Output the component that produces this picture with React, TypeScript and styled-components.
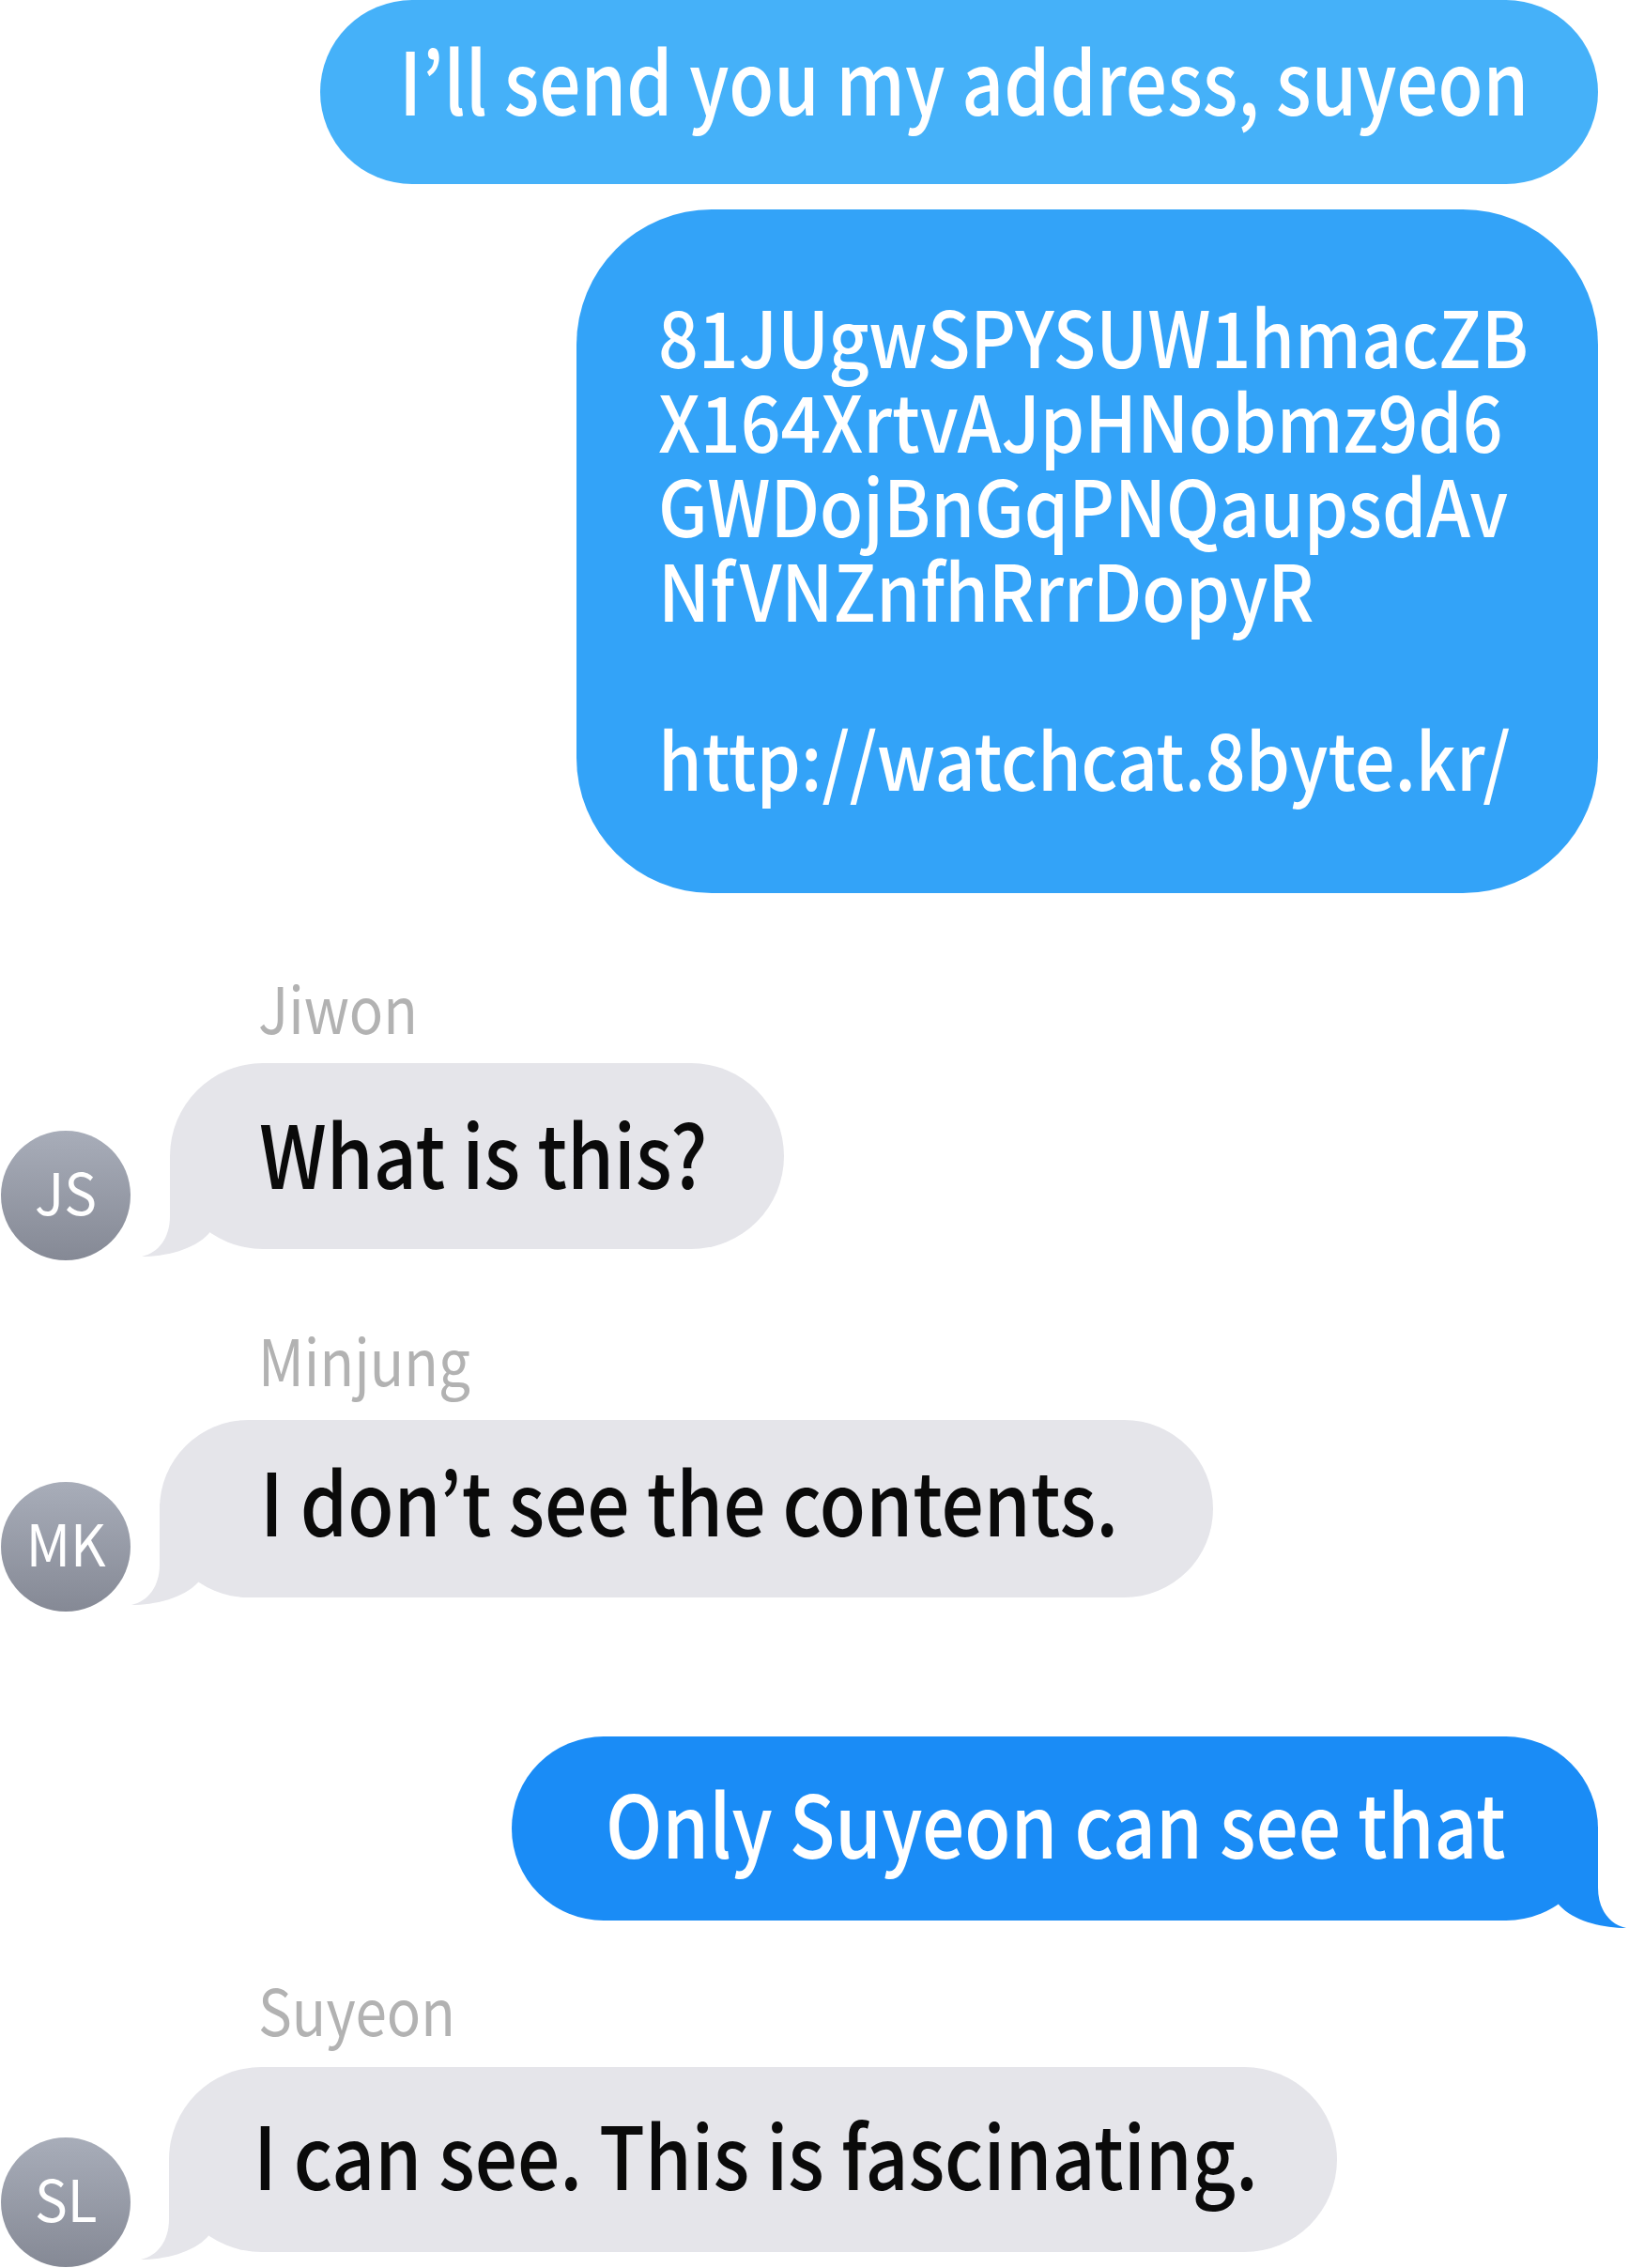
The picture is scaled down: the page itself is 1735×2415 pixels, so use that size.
import React from "react";
import styled, { createGlobalStyle } from "styled-components";

const FONT = `"Noto Sans CJK KR", "Noto Sans", sans-serif`;

const Global = createGlobalStyle`
  html, body { margin: 0; padding: 0; background: #ffffff; }
  #root { width: 1735px; }
`;

const Page = styled.div`
  width: 1735px;
  height: 2415px;
  overflow: hidden;
  background: #ffffff;
  display: flex;
  flex-direction: column;
  font-family: ${FONT};
`;

const SentRow = styled.div<{ $mt: number }>`
  display: flex;
  justify-content: flex-end;
  padding-right: 33px;
  margin-top: ${(p) => p.$mt}px;
`;

const Bubble = styled.div<{
  $bg: string;
  $fg: string;
  $w: number;
  $h: number;
  $r: number;
  $pt: number;
  $pl: number;
  $fs?: number;
  $lh?: number;
  $ml?: number;
}>`
  position: relative;
  box-sizing: border-box;
  flex-shrink: 0;
  width: ${(p) => p.$w}px;
  height: ${(p) => p.$h}px;
  margin-left: ${(p) => p.$ml ?? 0}px;
  border-radius: ${(p) => p.$r}px;
  background: ${(p) => p.$bg};
  color: ${(p) => p.$fg};
  padding-top: ${(p) => p.$pt}px;
  padding-left: ${(p) => p.$pl}px;
  font-size: ${(p) => p.$fs ?? 92}px;
  font-weight: 500;
  line-height: ${(p) => p.$lh ?? p.$fs ?? 92}px;
  white-space: nowrap;
`;

/* The reference face is a narrow cut of Source Sans; condense the glyphs horizontally. */
const Line = styled.span<{ $sx?: number; $h?: number }>`
  display: block;
  height: ${(p) => (p.$h ? `${p.$h}px` : "auto")};
  transform: scaleX(${(p) => p.$sx ?? 0.871});
  transform-origin: 0 50%;
`;

const Tail = styled.svg<{ $side: "left" | "right" }>`
  position: absolute;
  bottom: -12px;
  width: 140px;
  height: 120px;
  overflow: visible;
  ${(p) => (p.$side === "left" ? "left: -35px;" : "right: -35px; transform: scaleX(-1);")}
`;

const Group = styled.div<{ $mt: number }>`
  display: flex;
  flex-direction: column;
  margin-top: ${(p) => p.$mt}px;
`;

const SenderName = styled.div<{ $gap: number }>`
  font-size: 68px;
  line-height: 68px;
  color: #b2b2b2;
  padding-left: 275px;
  margin-bottom: ${(p) => p.$gap}px;
  white-space: nowrap;
  transform: scaleX(0.885);
  transform-origin: 275px 50%;
`;

const ReceivedRow = styled.div`
  display: flex;
  align-items: flex-end;
`;

const Avatar = styled.div<{ $drop: number }>`
  box-sizing: border-box;
  flex-shrink: 0;
  width: 138px;
  height: 138px;
  margin-left: 1px;
  margin-bottom: -${(p) => p.$drop}px;
  border-radius: 50%;
  background: linear-gradient(180deg, #a8adb9 0%, #858995 100%);
  color: #ffffff;
  font-size: 62px;
  display: flex;
  align-items: center;
  justify-content: center;
  padding-bottom: 13px;
`;

const Initials = styled.span`
  display: inline-block;
  transform: scaleX(0.94);
`;

const TAIL_PATH =
  "M35 8 L35 73 C35 96 23 112 5 116 C30 116 60 109 76 92 L100 60 L100 8 Z";

function BubbleTail({ side, color }: { side: "left" | "right"; color: string }) {
  return (
    <Tail $side={side} viewBox="0 0 140 120" aria-hidden>
      <path d={TAIL_PATH} fill={color} />
    </Tail>
  );
}

const GRAY = "#e5e5ea";
const INK = "#0a0a0a";

type Received = {
  name: string;
  initials: string;
  text: string;
  mt: number;
  gap: number;
  drop: number;
  ml: number;
  w: number;
  h: number;
  pt: number;
  pl: number;
  sx: number;
};

const received: Received[] = [
  { name: "Jiwon", initials: "JS", text: "What is this?", mt: 87, gap: 26, drop: 12, ml: 42, w: 654, h: 198, pt: 48, pl: 95, sx: 0.873 },
  { name: "Minjung", initials: "MK", text: "I don’t see the contents.", mt: 83, gap: 31, drop: 15, ml: 31, w: 1122, h: 189, pt: 38, pl: 107, sx: 0.871 },
];

const last: Received = {
  name: "Suyeon", initials: "SL", text: "I can see. This is fascinating.", mt: 60, gap: 28, drop: 16, ml: 41, w: 1244, h: 197, pt: 45, pl: 90, sx: 0.87,
};

function ReceivedMessage({ m }: { m: Received }) {
  return (
    <Group $mt={m.mt}>
      <SenderName $gap={m.gap}>{m.name}</SenderName>
      <ReceivedRow>
        <Avatar $drop={m.drop}>
          <Initials>{m.initials}</Initials>
        </Avatar>
        <Bubble $bg={GRAY} $fg={INK} $w={m.w} $h={m.h} $r={m.h / 2} $pt={m.pt} $pl={m.pl} $ml={m.ml}>
          <Line $sx={m.sx}>{m.text}</Line>
          <BubbleTail side="left" color={GRAY} />
        </Bubble>
      </ReceivedRow>
    </Group>
  );
}

const codeLines = [
  "81JUgwSPYSUW1hmacZB",
  "X164XrtvAJpHNobmz9d6",
  "GWDojBnGqPNQaupsdAv",
  "NfVNZnfhRrrDopyR",
  "",
  "http://watchcat.8byte.kr/",
];

export default function App() {
  return (
    <>
      <Global />
      <Page>
        <SentRow $mt={0}>
          <Bubble $bg="#45b1f9" $fg="#ffffff" $w={1361} $h={196} $r={98} $pt={37} $pl={84}>
            <Line $sx={0.85}>I’ll send you my address, suyeon</Line>
          </Bubble>
        </SentRow>
        <SentRow $mt={27}>
          <Bubble $bg="#33a3f8" $fg="#ffffff" $w={1088} $h={728} $r={144} $pt={88} $pl={87} $fs={83} $lh={90}>
            {codeLines.map((l, i) => (
              <Line key={i} $sx={0.906} $h={90}>
                {l}
              </Line>
            ))}
          </Bubble>
        </SentRow>
        {received.map((m) => (
          <ReceivedMessage key={m.name} m={m} />
        ))}
        <SentRow $mt={148}>
          <Bubble $bg="#1a8cf6" $fg="#ffffff" $w={1157} $h={196} $r={98} $pt={44} $pl={100}>
            <Line $sx={0.87}>Only Suyeon can see that</Line>
            <BubbleTail side="right" color="#1a8cf6" />
          </Bubble>
        </SentRow>
        <ReceivedMessage m={last} />
      </Page>
    </>
  );
}
